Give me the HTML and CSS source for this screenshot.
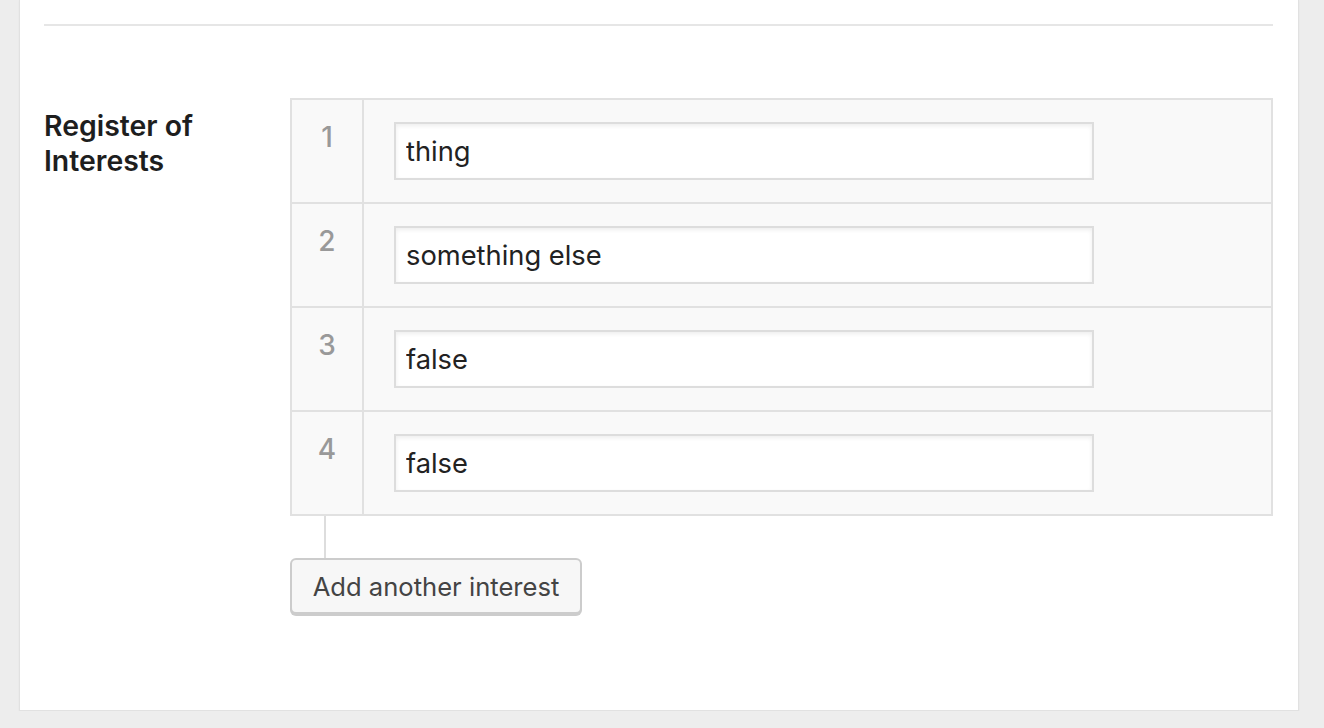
FILE: index.html
```html
<!DOCTYPE html>
<html>
<head>
<meta charset="utf-8">
<link rel="stylesheet" href="styles.css">
</head>
<body>
<div class="panel">
  <div class="sep"></div>
  <div class="field">
    <div class="label">Register of Interests</div>
    <div class="repeater">
      <div class="rows">
        <div class="row">
          <div class="num">1</div>
          <div class="cell"><input class="text" type="text" value="thing"></div>
        </div>
        <div class="row">
          <div class="num">2</div>
          <div class="cell"><input class="text" type="text" value="something else"></div>
        </div>
        <div class="row">
          <div class="num">3</div>
          <div class="cell"><input class="text" type="text" value="false"></div>
        </div>
        <div class="row">
          <div class="num">4</div>
          <div class="cell"><input class="text" type="text" value="false"></div>
        </div>
      </div>
      <div class="actions">
        <div class="connector"></div>
        <button class="btn" type="button">Add another interest</button>
      </div>
    </div>
  </div>
</div>
</body>
</html>
```

FILE: styles.css
```css
html, body {
  margin: 0;
  padding: 0;
  background: #ededed;
  font-family: Inter, "Liberation Sans", sans-serif;
}

.panel {
  margin-left: 19px;
  background: #fff;
  border: 1px solid #e1e1e1;
  border-top: 0;
  box-shadow: 0 1px 2px rgba(0,0,0,0.04);
  padding: 24px 25px 96px 24px;
  box-sizing: content-box;
  width: 1229px;
}

.sep {
  height: 2px;
  background: #e6e6e6;
}

.field {
  display: flex;
  margin-top: 72px;
}

.label {
  width: 200px;
  flex: none;
  margin-right: 46px;
  padding-top: 10px;
  font-size: 28.4px;
  line-height: 35px;
  font-weight: 600;
  color: #1e1e1e;
}

.repeater {
  flex: 1;
  display: flex;
  flex-direction: column;
}

.rows {
  border: 2px solid #e1e1e1;
  background: #f9f9f9;
}

.row {
  display: flex;
  border-top: 2px solid #e1e1e1;
}

.row:first-child {
  border-top: 0;
}

.num {
  width: 70px;
  flex: none;
  border-right: 2px solid #e1e1e1;
  text-align: center;
  font-size: 28px;
  font-weight: 500;
  line-height: 34px;
  padding-top: 20px;
  color: #999;
}

.cell {
  flex: 1;
  padding: 22px 30px;
}

.text {
  display: block;
  width: 700px;
  height: 58px;
  box-sizing: border-box;
  border: 2px solid #dddddd;
  box-shadow: inset 0 2px 4px rgba(0,0,0,0.07);
  background: #fff;
  padding: 0 10px;
  margin: 0;
  font-family: Inter, "Liberation Sans", sans-serif;
  font-size: 27.3px;
  color: #222;
  outline: none;
}

.actions {
  display: flex;
  flex-direction: column;
  align-items: flex-start;
}

.connector {
  width: 2px;
  height: 42px;
  background: #dddddd;
  margin-left: 34px;
}

.btn {
  height: 56px;
  width: 292px;
  padding: 0;
  border: 2px solid #cccccc;
  border-radius: 6px;
  background: #f7f7f7;
  box-shadow: 0 2px 0 #cccccc;
  font-family: Inter, "Liberation Sans", sans-serif;
  font-size: 25.6px;
  color: #444;
  cursor: pointer;
}
```
